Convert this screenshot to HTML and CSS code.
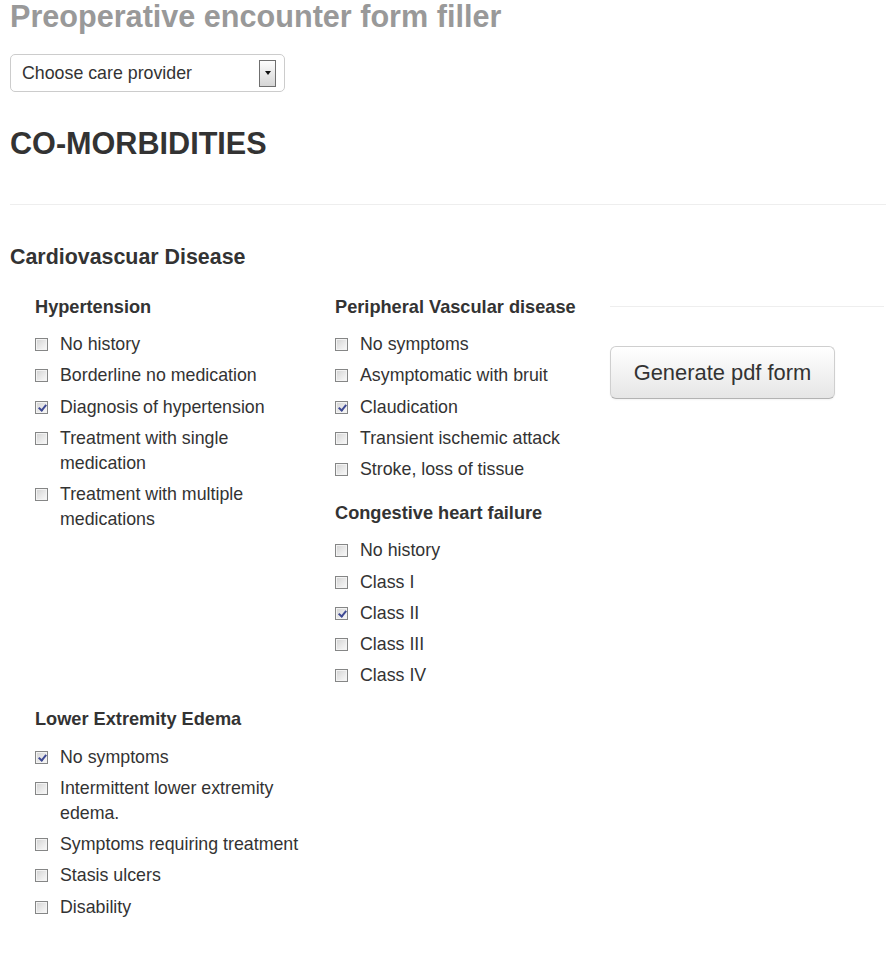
FILE: index.html
```html
<!DOCTYPE html>
<html lang="en">
<head>
<meta charset="utf-8">
<title>Preoperative encounter form filler</title>
<link rel="stylesheet" href="styles.css">
</head>
<body>
<h3 class="page-title">Preoperative encounter form filler</h3>
<div class="fake-select">
  <span class="fake-select-text">Choose care provider</span>
  <span class="fake-select-btn"><span class="fake-select-arrow"></span></span>
</div>

<h3 class="section-title">CO-MORBIDITIES</h3>
<hr class="divider">

<h4 class="group-title">Cardiovascuar Disease</h4>

<div class="grid">
  <div class="col">
    <h5 class="sub-title">Hypertension</h5>
    <label class="checkbox"><input type="checkbox">No history</label>
    <label class="checkbox"><input type="checkbox">Borderline no medication</label>
    <label class="checkbox"><input type="checkbox" checked>Diagnosis of hypertension</label>
    <label class="checkbox"><input type="checkbox">Treatment with single medication</label>
    <label class="checkbox"><input type="checkbox">Treatment with multiple medications</label>
  </div>
  <div class="col col-mid">
    <h5 class="sub-title">Peripheral Vascular disease</h5>
    <label class="checkbox"><input type="checkbox">No symptoms</label>
    <label class="checkbox"><input type="checkbox">Asymptomatic with bruit</label>
    <label class="checkbox"><input type="checkbox" checked>Claudication</label>
    <label class="checkbox"><input type="checkbox">Transient ischemic attack</label>
    <label class="checkbox"><input type="checkbox">Stroke, loss of tissue</label>
    <h5 class="sub-title">Congestive heart failure</h5>
    <label class="checkbox"><input type="checkbox">No history</label>
    <label class="checkbox"><input type="checkbox">Class I</label>
    <label class="checkbox"><input type="checkbox" checked>Class II</label>
    <label class="checkbox"><input type="checkbox">Class III</label>
    <label class="checkbox"><input type="checkbox">Class IV</label>
  </div>
  <div class="col col-side">
    <hr class="side-rule">
    <button class="btn-large" type="button">Generate pdf form</button>
  </div>
  <div class="col">
    <h5 class="sub-title">Lower Extremity Edema</h5>
    <label class="checkbox"><input type="checkbox" checked>No symptoms</label>
    <label class="checkbox"><input type="checkbox">Intermittent lower extremity edema.</label>
    <label class="checkbox"><input type="checkbox">Symptoms requiring treatment</label>
    <label class="checkbox"><input type="checkbox">Stasis ulcers</label>
    <label class="checkbox"><input type="checkbox">Disability</label>
  </div>
</div>
</body>
</html>
```
FILE: styles.css
```css
html, body {
  background: #fff;
}
body {
  margin: 0;
  padding: 0 10px;
  font-family: "Liberation Sans", Arial, sans-serif;
  font-size: 17.8px;
  line-height: 25px;
  color: #333;
}
.page-title {
  margin: 0 0 21px;
  font-size: 30.6px;
  line-height: 33px;
  font-weight: bold;
  color: #999;
}
.fake-select {
  box-sizing: border-box;
  width: 275px;
  height: 38px;
  border: 1px solid #ccc;
  border-radius: 5px;
  background: #fff;
  display: flex;
  align-items: center;
  padding-left: 11px;
  padding-right: 8px;
}
.fake-select-text {
  flex: 1;
  color: #333;
  white-space: nowrap;
}
.fake-select-btn {
  box-sizing: border-box;
  width: 17px;
  height: 27px;
  border: 1px solid #6f6f6f;
  background: linear-gradient(#fdfdfd, #d5d5d5);
  display: flex;
  align-items: center;
  justify-content: center;
}
.fake-select-arrow {
  width: 0;
  height: 0;
  border-left: 3.5px solid transparent;
  border-right: 3.5px solid transparent;
  border-top: 4px solid #111;
}
.section-title {
  margin: 26px 0 0;
  font-size: 30.6px;
  line-height: 50px;
  font-weight: bold;
  color: #333;
}
.divider {
  margin: 36px 0 38.5px;
  border: 0;
  border-top: 1px solid #eee;
  border-bottom: 1px solid #fff;
}
.group-title {
  margin: 0 0 12.5px;
  font-size: 21.4px;
  line-height: 25px;
  font-weight: bold;
}
.grid {
  margin-left: 25px;
  display: grid;
  grid-template-columns: 300px 275px 274px;
  align-items: start;
}
.col {
  display: flex;
  flex-direction: column;
  align-items: stretch;
  width: 275px;
}
.col-mid {
  width: 250px;
}
.col-side {
  width: 274px;
  align-items: flex-start;
}
.sub-title {
  margin: 12.5px 0;
  font-size: 18.2px;
  line-height: 25px;
  font-weight: bold;
}
.checkbox {
  display: block;
  padding-left: 25px;
  margin-bottom: 6.25px;
  line-height: 25px;
}
.checkbox input {
  -webkit-appearance: none;
  appearance: none;
  float: left;
  position: relative;
  box-sizing: border-box;
  width: 13px;
  height: 13px;
  margin: 6px 0 0 -25px;
  border: 1px solid #858686;
  background: linear-gradient(135deg, #d2d2d2 0%, #e9e9e9 55%, #fafafa 100%);
  box-shadow: inset 0 0 0 1px #f3f3f3;
}
.checkbox input:checked::after {
  content: "";
  position: absolute;
  left: 3.5px;
  top: 1px;
  width: 3px;
  height: 6px;
  border-right: 2px solid #3f4a94;
  border-bottom: 2px solid #3f4a94;
  transform: rotate(40deg);
}
.side-rule {
  align-self: stretch;
  margin: 24px 0 38px;
  border: 0;
  border-top: 1px solid #eee;
  border-bottom: 1px solid #fff;
}
.btn-large {
  box-sizing: border-box;
  width: 225px;
  height: 53px;
  padding: 13px 0;
  white-space: nowrap;
  text-align: center;
  font-family: "Liberation Sans", Arial, sans-serif;
  font-size: 21.9px;
  line-height: 25px;
  color: #333;
  background: linear-gradient(#ffffff, #e6e6e6);
  border: 1px solid #cfcfcf;
  border-bottom-color: #b3b3b3;
  border-radius: 6px;
  box-shadow: inset 0 1px 0 rgba(255,255,255,.2), 0 1px 2px rgba(0,0,0,.05);
  cursor: pointer;
}
```
